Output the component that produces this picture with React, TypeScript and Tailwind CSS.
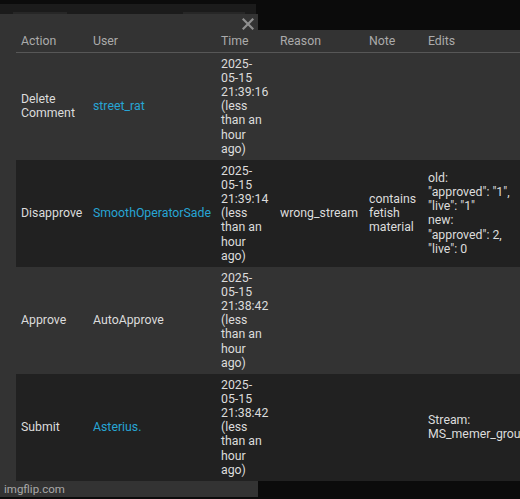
import React from "react";

const COLS = "grid grid-cols-[72px_128px_59px_89px_59px_110px] items-center";
const cell = "px-[5px] py-[3.8px]";

function Link({ children }: { children: React.ReactNode }) {
  return <span className="text-[#27a5d5]">{children}</span>;
}

function TimeCell({ t }: { t: string }) {
  return (
    <div className={cell}>
      2025-
      <br />
      05-15
      <br />
      {t}
      <br />
      (less
      <br />
      than an
      <br />
      hour
      <br />
      ago)
    </div>
  );
}

type Row = {
  action: React.ReactNode;
  user: React.ReactNode;
  time: string;
  reason?: React.ReactNode;
  note?: React.ReactNode;
  edits?: React.ReactNode;
  dark?: boolean;
};

const rows: Row[] = [
  { action: "Delete Comment", user: <Link>street_rat</Link>, time: "21:39:16" },
  {
    action: "Disapprove",
    user: <Link>SmoothOperatorSade</Link>,
    time: "21:39:14",
    reason: "wrong_stream",
    note: "contains fetish material",
    edits: (
      <div className="whitespace-nowrap">
        <div>old:</div>
        <div>"approved": "1",</div>
        <div>"live": "1"</div>
        <div>new:</div>
        <div>"approved": 2,</div>
        <div>"live": 0</div>
      </div>
    ),
    dark: true,
  },
  { action: "Approve", user: "AutoApprove", time: "21:38:42" },
  {
    action: "Submit",
    user: <Link>Asterius.</Link>,
    time: "21:38:42",
    edits: (
      <div className="whitespace-nowrap">
        <div>Stream:</div>
        <div>MS_memer_group</div>
      </div>
    ),
    dark: true,
  },
];

export default function App() {
  return (
    <div
      className="w-[520px] h-[499px] bg-[#0b0b0b] overflow-hidden text-[12.3px] leading-[14.2px]"
      style={{ fontFamily: 'Roboto, "Liberation Sans", sans-serif' }}
    >
      <div className="h-[4px]" />
      <div className="h-[10px] w-[256px] bg-[#1b1b1b] flex items-end">
        <div className="ml-[13px] w-[54px] h-[2px] bg-[#272727]" />
        <div className="ml-[116px] w-[62px] h-[2px] bg-[#272727]" />
      </div>
      <div className="relative w-[258px] h-[483px] bg-[#333333] flex flex-col">
        <button className="absolute right-[4px] top-[4px] w-[12px] h-[12px] text-[#8f8f8f]">
          <svg width="12" height="12" viewBox="0 0 12 12">
            <path d="M1.5 1.5 L10.5 10.5 M10.5 1.5 L1.5 10.5" stroke="currentColor" strokeWidth="2.2" strokeLinecap="square" />
          </svg>
        </button>
        <div className="pt-[16px] pl-[16px] flex-1">
          <div className="w-[517px] text-[#dcdcdc]">
            <div className={`${COLS} bg-[#333333] border-b border-[#575757] text-[#ababab]`}>
              <div className={cell}>Action</div>
              <div className={cell}>User</div>
              <div className={cell}>Time</div>
              <div className={cell}>Reason</div>
              <div className={cell}>Note</div>
              <div className={cell}>Edits</div>
            </div>
            {rows.map((r, i) => (
              <div key={i} className={`${COLS} ${r.dark ? "bg-[#212121]" : "bg-[#333333]"}`}>
                <div className={cell}>{r.action}</div>
                <div className={cell}>{r.user}</div>
                <TimeCell t={r.time} />
                <div className={cell}>{r.reason}</div>
                <div className={cell}>{r.note}</div>
                <div className={cell}>{r.edits}</div>
              </div>
            ))}
          </div>
        </div>
        <div className="h-[16px] pl-[4px] text-[11.5px] leading-[16px] text-[#a9a9a9]">imgflip.com</div>
      </div>
    </div>
  );
}
